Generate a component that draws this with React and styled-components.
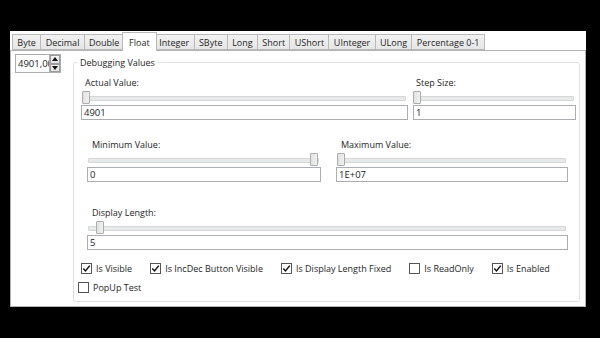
import React from "react";
import styled, { createGlobalStyle } from "styled-components";

const GlobalStyle = createGlobalStyle`
  html, body {
    margin: 0;
    background: #000;
  }
  body {
    font-family: "Open Sans", "Noto Sans", sans-serif;
    font-size: 9px;
    color: #1e1e1e;
  }
`;

const Screen = styled.div`
  width: 600px;
  height: 338px;
  box-sizing: border-box;
  padding: 31px 14px 31px 10px;
  background: #000;
`;

const Window = styled.div`
  width: 576px;
  height: 276px;
  background: #fff;
  display: flex;
  flex-direction: column;
`;

// tab header row
const TabStrip = styled.div`
  display: flex;
  align-items: flex-end;
  height: 19px;
  padding-left: 3px;
  flex-shrink: 0;
`;

const Tab = styled.div`
  position: relative;
  box-sizing: border-box;
  display: flex;
  align-items: center;
  height: ${({ $active }) => ($active ? 19 : 16)}px;
  padding: 0 ${({ $active }) => ($active ? 6.35 : 4.35)}px;
  margin: ${({ $active }) => ($active ? "0 -2px -1px -3px" : "0 0 0 -1px")};
  border: 1px solid #b9b9b9;
  border-bottom: ${({ $active }) => ($active ? "none" : "1px solid #b9b9b9")};
  background: ${({ $active }) =>
    $active ? "#fff" : "linear-gradient(#f2f2f2, #e6e6e6)"};
  z-index: ${({ $active }) => ($active ? 1 : 0)};
  white-space: nowrap;
  line-height: 1;
`;

const Panel = styled.div`
  flex: 1;
  display: flex;
  border: 1px solid #b4b4b4;
  background: #fff;
  min-height: 0;
`;

const LeftColumn = styled.div`
  width: 62px;
  flex-shrink: 0;
  padding: 3px 0 0 4px;
  box-sizing: border-box;
`;

// numeric up/down
const Spinner = styled.div`
  display: flex;
  width: 46px;
  height: 19px;
`;

const SpinText = styled.div`
  box-sizing: border-box;
  width: 34px;
  border: 1px solid #abadb3;
  border-right: none;
  padding-left: 2px;
  line-height: 17px;
  font-size: 9.5px;
  overflow: hidden;
  white-space: nowrap;
`;

const SpinButtons = styled.div`
  display: flex;
  flex-direction: column;
  width: 12px;
  border: 1px solid #abadb3;
  box-sizing: border-box;
`;

const SpinButton = styled.div`
  flex: 1;
  display: flex;
  align-items: center;
  justify-content: center;
  background: linear-gradient(#f4f4f4, #e2e2e2);
  border: 1px solid #9c9c9c;
`;

const GroupBox = styled.div`
  flex: 1;
  display: flex;
  flex-direction: column;
  margin: 11px 5px 4px 0;
  border: 1px solid #dde1e5;
  border-radius: 3px;
`;

const GroupHeader = styled.div`
  align-self: flex-start;
  margin: -7px 0 0 3px;
  padding: 0 3px;
  line-height: 13px;
  background: #fff;
`;

const Row = styled.div`
  display: flex;
  align-items: flex-start;
  gap: ${({ $gap }) => $gap || 0}px;
  padding-left: ${({ $left }) => $left}px;
  margin-top: ${({ $top }) => $top}px;
`;

const Field = styled.div`
  display: flex;
  flex-direction: column;
  width: ${({ $width }) => $width}px;
`;

const Label = styled.div`
  height: 13px;
  line-height: 13px;
  padding-left: ${({ $indent }) => $indent}px;
  white-space: nowrap;
`;

const SliderArea = styled.div`
  position: relative;
  height: 16px;
`;

const Track = styled.div`
  position: absolute;
  left: 1px;
  right: 2px;
  top: 7px;
  height: 3px;
  background: #e7eaea;
  border: 1px solid #d6d6d6;
  border-radius: 1px;
`;

const Thumb = styled.div`
  position: absolute;
  top: 2px;
  width: 8px;
  height: 13px;
  box-sizing: border-box;
  background: linear-gradient(90deg, #e2e2e2, #f0f0f0);
  border: 1px solid #acacac;
  border-radius: 1px;
`;

const TextBox = styled.div`
  box-sizing: border-box;
  height: 15px;
  border: 1px solid #abadb3;
  background: #fff;
  padding-left: 2px;
  line-height: 13px;
  font-size: 9.5px;
`;

const CheckRow = styled.div`
  display: flex;
  align-items: center;
  gap: 18px;
  height: 13px;
  padding-left: ${({ $left }) => $left}px;
  margin-top: ${({ $top }) => $top}px;
`;

const CheckItem = styled.label`
  display: flex;
  align-items: center;
  gap: 4px;
  white-space: nowrap;
`;

const Box = styled.span`
  box-sizing: border-box;
  width: 11px;
  height: 11px;
  border: 1px solid #555;
  background: #fff;
  display: flex;
  align-items: center;
  justify-content: center;
`;

const CheckBox = ({ checked, children }) => (
  <CheckItem>
    <Box>
      {checked && (
        <svg width="9" height="9" viewBox="0 0 9 9">
          <path d="M1.3 4.6 L3.5 6.9 L7.8 1.6" fill="none" stroke="#111" strokeWidth="1.5" />
        </svg>
      )}
    </Box>
    {children}
  </CheckItem>
);

const Slider = ({ thumb }) => (
  <SliderArea>
    <Track />
    <Thumb style={{ left: thumb }} />
  </SliderArea>
);

const ValueField = ({ width, indent, label, value, thumb }) => (
  <Field $width={width}>
    <Label $indent={indent}>{label}</Label>
    <Slider thumb={thumb} />
    <TextBox>{value}</TextBox>
  </Field>
);

const tabs = [
  "Byte", "Decimal", "Double", "Float", "Integer", "SByte", "Long",
  "Short", "UShort", "UInteger", "ULong", "Percentage 0-1",
];

export default function App() {
  return (
    <>
      <GlobalStyle />
      <Screen>
        <Window>
          <TabStrip>
            {tabs.map((t) => (
              <Tab key={t} $active={t === "Float"}>{t}</Tab>
            ))}
          </TabStrip>
          <Panel>
            <LeftColumn>
              <Spinner>
                <SpinText>4901,0000</SpinText>
                <SpinButtons>
                  <SpinButton>
                    <svg width="6" height="4" viewBox="0 0 6 4"><path d="M0 4 L3 0 L6 4 Z" fill="#111" /></svg>
                  </SpinButton>
                  <SpinButton>
                    <svg width="6" height="4" viewBox="0 0 6 4"><path d="M0 0 L6 0 L3 4 Z" fill="#111" /></svg>
                  </SpinButton>
                </SpinButtons>
              </Spinner>
            </LeftColumn>
            <GroupBox>
              <GroupHeader>Debugging Values</GroupHeader>
              <Row $left={7} $gap={5} $top={7}>
                <ValueField width={327} indent={4} label="Actual Value:" value="4901" thumb={1} />
                <ValueField width={163} indent={3} label="Step Size:" value="1" thumb={0} />
              </Row>
              <Row $left={13} $gap={15} $top={18}>
                <ValueField width={234} indent={5} label="Minimum Value:" value="0" thumb={223} />
                <ValueField width={232} indent={5} label="Maximum Value:" value="1E+07" thumb={1} />
              </Row>
              <Row $left={13} $top={24}>
                <ValueField width={481} indent={5} label="Display Length:" value="5" thumb={9} />
              </Row>
              <CheckRow $left={7} $top={12}>
                <CheckBox checked>Is Visible</CheckBox>
                <CheckBox checked>Is IncDec Button Visible</CheckBox>
                <CheckBox checked>Is Display Length Fixed</CheckBox>
                <CheckBox>Is ReadOnly</CheckBox>
                <CheckBox checked>Is Enabled</CheckBox>
              </CheckRow>
              <CheckRow $left={4} $top={6}>
                <CheckBox>PopUp Test</CheckBox>
              </CheckRow>
            </GroupBox>
          </Panel>
        </Window>
      </Screen>
    </>
  );
}
